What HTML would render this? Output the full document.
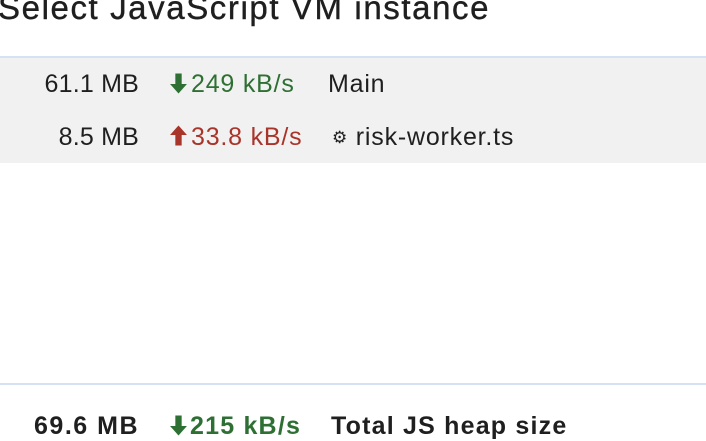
<!DOCTYPE html>
<html><head><style>
body{margin:0;width:706px;height:434px;overflow:hidden;background:#fff;font-family:"Liberation Sans",sans-serif;color:#1f1f1f;position:relative}
.t{position:absolute;white-space:nowrap}
.title{left:-2px;top:-11px;font-size:33px;letter-spacing:1.6px;-webkit-text-stroke:0.4px #1f1f1f}
.sep{position:absolute;left:0;width:706px;height:2px;background:#d5e2f6}
.gray{position:absolute;left:0;top:58px;width:706px;height:105px;background:#f1f1f1}
.r{font-size:25px;letter-spacing:0.8px}
.num{right:567px;text-align:right;letter-spacing:0.2px}
.g{color:#2e7034}.red{color:#a8342a}
</style></head><body>
<div class="t title">Select JavaScript VM instance</div>
<div class="sep" style="top:56px"></div>
<div class="gray"></div>
<div class="t r num" style="top:70px">61.1 MB</div>
<div class="t r g" style="left:169px;top:70px"><svg width="19" height="22" viewBox="0 0 18 20" style="vertical-align:-2px;margin-right:3px"><path d="M6 1h6v10h5l-8 9-8-9h5z" fill="#2e7034"/></svg>249 kB/s</div>
<div class="t r" style="left:328px;top:70px">Main</div>
<div class="t r num" style="top:123px">8.5 MB</div>
<div class="t r red" style="left:169px;top:123px"><svg width="19" height="22" viewBox="0 0 18 20" style="vertical-align:-2px;margin-right:3px"><path d="M6 19h6V9h5L9 0 1 9h5z" fill="#a8342a"/></svg>33.8 kB/s</div>
<div class="t r" style="left:332px;top:123px"><span style="font-size:17px;vertical-align:2px">⚙</span> risk-worker.ts</div>
<div class="sep" style="top:383px"></div>
<div class="t r num" style="top:412px;font-weight:bold;letter-spacing:1.5px">69.6 MB</div>
<div class="t r g" style="left:169px;top:412px;font-weight:bold;letter-spacing:1.2px"><svg width="19" height="22" viewBox="0 0 18 20" style="vertical-align:-2px;margin-right:2px"><path d="M6 1h6v10h5l-8 9-8-9h5z" fill="#2e7034"/></svg>215 kB/s</div>
<div class="t r" style="left:331px;top:412px;font-weight:bold;letter-spacing:1.2px">Total JS heap size</div>
</body></html>
